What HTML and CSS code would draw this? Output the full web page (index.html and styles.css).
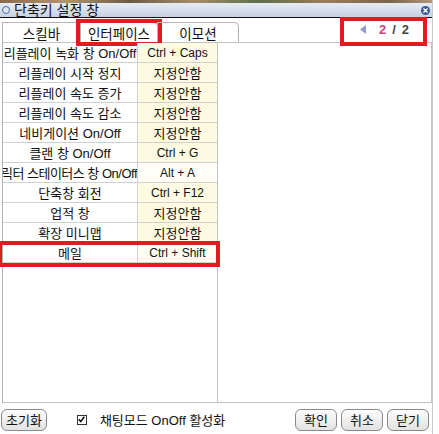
FILE: index.html
```html
<!DOCTYPE html>
<html lang="ko">
<head>
    <meta charset="UTF-8">
    <title>단축키 설정 창</title>
    <link rel="stylesheet" href="styles.css">
</head>
<body>
    <div class="window">
        <div class="title-strip"></div>
        <div class="titlebar">
            <span class="title-icon"></span>
            <span class="title-text">단축키 설정 창</span>
            <span class="close-btn">
                <svg width="9" height="9" viewBox="0 0 9 9"><path d="M2.5 2.5 L6.5 6.5 M6.5 2.5 L2.5 6.5" stroke="#fff" stroke-width="1.4"/></svg>
            </span>
        </div>

        <div class="tab-row">
            <div class="tab">스킬바</div>
            <div class="tab active">인터페이스<span class="mark"></span></div>
            <div class="tab">이모션</div>
            <div class="pager">
                <svg class="pager-arrow" width="6" height="9" viewBox="0 0 6 9"><path d="M6 0 L0 4.5 L6 9 Z" fill="#8f9cc8"/></svg>
                <span class="pager-cur">2</span>
                <span class="pager-sep">/</span>
                <span class="pager-total">2</span>
                <span class="mark"></span>
            </div>
        </div>

        <div class="panel">
            <div class="key-list">
                <div class="row"><div class="name">리플레이 녹화 창 On/Off</div><div class="key">Ctrl + Caps</div></div>
                <div class="row"><div class="name">리플레이 시작 정지</div><div class="key ko">지정안함</div></div>
                <div class="row"><div class="name">리플레이 속도 증가</div><div class="key ko">지정안함</div></div>
                <div class="row"><div class="name">리플레이 속도 감소</div><div class="key ko">지정안함</div></div>
                <div class="row"><div class="name">네비게이션 On/Off</div><div class="key ko">지정안함</div></div>
                <div class="row"><div class="name">클랜 창 On/Off</div><div class="key">Ctrl + G</div></div>
                <div class="row"><div class="name long">캐릭터 스테이터스 창 On/Off</div><div class="key plain">Alt + A</div></div>
                <div class="row"><div class="name">단축창 회전</div><div class="key">Ctrl + F12</div></div>
                <div class="row"><div class="name">업적 창</div><div class="key ko">지정안함</div></div>
                <div class="row"><div class="name">확장 미니맵</div><div class="key ko">지정안함</div></div>
                <div class="row selected"><div class="name">메일</div><div class="key">Ctrl + Shift</div><span class="mark"></span></div>
            </div>
            <div class="blank"></div>
        </div>

        <div class="footer">
            <button class="btn">초기화</button>
            <label class="check">
                <span class="check-box">
                    <svg width="7" height="7" viewBox="0 0 7 7"><path d="M0.8 3.4 L2.8 5.6 L6.3 0.8" stroke="#111" stroke-width="1.6" fill="none"/></svg>
                </span>
                채팅모드 OnOff 활성화
            </label>
            <div class="footer-right">
                <button class="btn">확인</button>
                <button class="btn">취소</button>
                <button class="btn">닫기</button>
            </div>
        </div>
    </div>
</body>
</html>
```

FILE: styles.css
```css
body {
    margin: 0;
    background-color: #fff;
    font-family: 'Liberation Sans', 'Noto Sans CJK KR', sans-serif;
    color: #111;
}

.window {
    width: 432px;
    height: 434px;
    border-right: 1px solid #c8c8c8;
    display: flex;
    flex-direction: column;
}

.title-strip {
    height: 3px;
    background: linear-gradient(90deg, #8a6a4a, #b49470 15%, #6d5a44 30%, #a48c6c 45%, #5f6f4a 60%, #9a7c5c 75%, #7a644a 90%, #b09878);
}

.titlebar {
    height: 14px;
    display: flex;
    align-items: center;
    background: linear-gradient(#e6ecf4, #c7d2e2);
    border-bottom: 1px solid #111;
    position: relative;
}

.title-icon {
    width: 6px;
    height: 6px;
    margin-left: 2px;
    border: 1px solid #4a6aa0;
    border-radius: 50%;
    background-color: #dfe7f4;
}

.title-text {
    margin-left: 4px;
    font-size: 14px;
    line-height: 14px;
    color: #111;
}

.close-btn {
    position: absolute;
    right: 2px;
    top: 3px;
    width: 9px;
    height: 9px;
    border-radius: 50%;
    background-color: #3c5a90;
    display: flex;
}

.tab-row {
    height: 24px;
    display: flex;
    align-items: flex-end;
    position: relative;
}

.tab {
    height: 20px;
    box-sizing: border-box;
    border: 1px solid #b4b4b4;
    border-bottom: none;
    border-top-right-radius: 5px;
    display: flex;
    align-items: center;
    justify-content: center;
    font-size: 13.5px;
    position: relative;
    margin-right: -1px;
}

.tab:nth-child(1) {
    width: 79px;
    margin-left: 2px;
}

.tab:nth-child(2) {
    width: 78px;
}

.tab:nth-child(3) {
    width: 82px;
}

.mark {
    position: absolute;
    border: 4px solid #e01b22;
    pointer-events: none;
}

.tab .mark {
    left: -5px;
    right: -5px;
    top: -4px;
    bottom: -4px;
}

.pager {
    position: absolute;
    right: 9px;
    top: 0;
    width: 73px;
    height: 22px;
    display: flex;
    align-items: center;
    padding-left: 6px;
    font-size: 13px;
    font-weight: bold;
}

.pager .mark {
    left: -4px;
    right: -4px;
    top: -1px;
    bottom: -6px;
}

.pager-arrow {
    margin-left: 10px;
    margin-right: 13px;
}

.pager-cur {
    color: #c8457e;
}

.pager-sep {
    margin: 0 6px;
    color: #444;
}

.pager-total {
    color: #444;
}

.panel {
    margin-left: 2px;
    height: 359px;
    border: 1px solid #c4c4c4;
    border-left-color: #b0b0b0;
    display: flex;
}

.key-list {
    width: 214px;
    border-right: 1px solid #c4c4c4;
    display: flex;
    flex-direction: column;
}

.row {
    height: 20px;
    display: flex;
    border-bottom: 1px solid #d0d0d0;
    box-sizing: border-box;
    position: relative;
    font-size: 12px;
}

.row .mark {
    left: -5px;
    right: -3px;
    top: -2px;
    bottom: -5px;
}

.name {
    width: 134px;
    border-right: 1px solid #d0d0d0;
    display: flex;
    align-items: center;
    justify-content: center;
    overflow: hidden;
    white-space: nowrap;
    font-size: 13px;
}

/* too wide for the cell: the game clips it from the left */
.name.long {
    justify-content: flex-end;
    letter-spacing: -0.5px;
}

.key {
    flex: 1;
    background-color: #fffbe2;
    display: flex;
    align-items: center;
    justify-content: center;
    white-space: nowrap;
}

.key.ko {
    font-size: 13px;
}

.key.plain {
    background-color: #fffff8;
}

.row.selected .key {
    background-color: #fffef0;
}

.blank {
    flex: 1;
}

.footer {
    flex: 1;
    display: flex;
    align-items: center;
    padding: 2px 3px 0 1px;
}

.btn {
    height: 22px;
    padding: 0 4px;
    border: 1px solid #8a8a8a;
    border-radius: 6px;
    background: linear-gradient(#fdfdfd, #e2e2e2);
    font-family: 'Liberation Sans', 'Noto Sans CJK KR', sans-serif;
    font-size: 13px;
    color: #111;
}

.check {
    display: flex;
    align-items: center;
    margin-left: 30px;
    font-size: 13px;
}

.check-box {
    width: 8px;
    height: 8px;
    border: 1px solid #333;
    margin-right: 13px;
    display: flex;
    align-items: center;
    justify-content: center;
}

.footer-right {
    margin-left: auto;
    display: flex;
    gap: 4px;
}

.footer-right .btn {
    width: 42px;
}
```
